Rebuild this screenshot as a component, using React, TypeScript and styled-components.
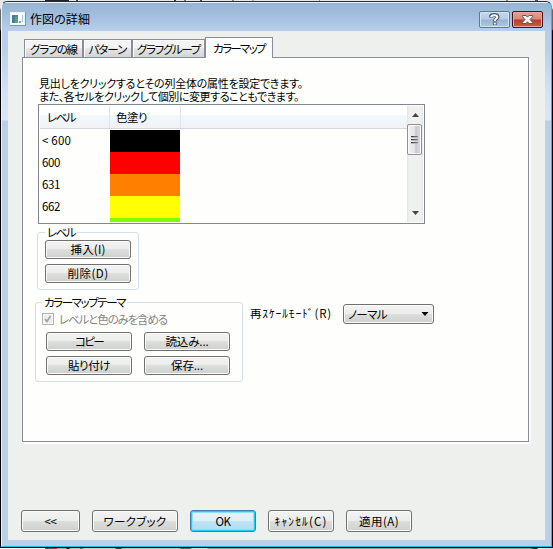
import React, { useLayoutEffect, useRef, useState } from 'react';
import styled, { createGlobalStyle, css } from 'styled-components';

const Global = createGlobalStyle`
  * { box-sizing: border-box; }
  html, body { margin: 0; padding: 0; overflow: hidden; }
  body {
    font-family: "Noto Sans CJK JP", "Liberation Sans", sans-serif;
    font-size: 11.5px;
    line-height: 12px;
    color: #000;
  }
`;

/* ---------- text fitted to a measured width ---------- */

const TextSpan = styled.span<{ $shift: number }>`
  display: inline-block;
  white-space: pre;
  font-feature-settings: 'palt' 1;
  margin-top: ${p => p.$shift}px;
`;

function Fit({ children, w, shift = 0 }: { children: string; w: number; shift?: number }) {
  const ref = useRef<HTMLSpanElement>(null);
  const [spacing, setSpacing] = useState(0);
  useLayoutEffect(() => {
    if (!ref.current) return;
    const natural = ref.current.getBoundingClientRect().width;
    setSpacing((w - natural) / children.length);
  }, [children, w]);
  return (
    <TextSpan ref={ref} $shift={shift} style={{ letterSpacing: spacing }}>
      {children}
    </TextSpan>
  );
}

/* ---------- window frame ---------- */

const Desktop = styled.div`
  width: 553px;
  height: 549px;
  padding: 1px 1px 2px 1px;
  background:
    linear-gradient(90deg, transparent 45px, #222 45px 69px, transparent 69px 76px, #444 76px 78px, transparent 78px 174px,
      #333 174px 176px, transparent 176px 184px, #777 184px 186px, transparent 186px 200px, #444 200px 202px,
      transparent 202px 232px, #888 232px 234px, transparent 234px 252px, #aaa 252px 254px, transparent 254px 319px,
      #888 319px 320px, transparent 320px 506px, #888 506px 508px, transparent 508px 535px, #555 535px 538px, transparent 538px) 0 0 / 100% 1px no-repeat,
    linear-gradient(90deg, #fff 45px, #555 45px 50px, #d22 55px 57px, #a9a9a9 57px 66px, #111 67px 69px, #bbb 70px 80px,
      #777 80px 82px, #ccc 84px 115px, #444 116px 121px, #bbb 122px 180px, #666 181px 190px, #ddd 192px 207px,
      #999 208px 530px, #333 534px 537px, #ddd 538px) 0 548px / 100% 1px no-repeat,
    linear-gradient(#e8e8e8 0 8px, #666 10px 29px, #000 31px 548px, #fff 548px);
`;

const Window = styled.div`
  width: 551px;
  height: 546px;
  display: flex;
  flex-direction: column;
  padding: 1px 6px 6px 6px;
  border: 1px solid;
  border-color: #243238 #00cfe8 #10c5d8 #e9f4fc;
  border-radius: 6px 6px 0 0;
  background:
    linear-gradient(#e6f1fb, #e6f1fb) 0 0 / 100% 1px no-repeat,
    linear-gradient(#97b5d3 0, #a0bddc 12px, #b5cfea 28px, #b6d0ea 45px, #d3e2f6 92px, #d9e6f6 118px, #b8d1e9 119px);
`;

const TitleBar = styled.header`
  height: 28px;
  display: flex;
  align-items: flex-start;
  padding: 8px 2px 0 2px;
`;

const AppIcon = styled.svg`
  width: 16px;
  height: 14px;
  margin-top: 1px;
`;

const Title = styled.h1`
  flex: 1;
  margin: 1px 0 0 4px;
  font-size: 12px;
  font-weight: 400;
  line-height: 14px;
`;

const CaptionButton = styled.button<{ $close?: boolean }>`
  width: 31px;
  height: 17px;
  margin-left: 2px;
  padding: 0;
  display: flex;
  justify-content: center;
  align-items: center;
  border-radius: 2px;
  ${p => p.$close ? css`
    border: 1px solid #43141d;
    box-shadow: inset 0 0 0 1px #e3a99f;
    background: linear-gradient(#e5a294 0, #d98878 7px, #b93b27 8px, #ca5f43 100%);
  ` : css`
    border: 1px solid #5c7899;
    box-shadow: inset 0 0 0 1px #d3e3f4;
    background: linear-gradient(#c5d8ed 0, #b5cce5 7px, #98b4d4 8px, #adc9e5 100%);
  `}
`;

const Client = styled.main`
  flex: 1;
  display: flex;
  flex-direction: column;
  padding: 6px 15px 8px 14px;
  background: #eef0ee;
`;

/* ---------- tabs ---------- */

const TabStrip = styled.div`
  height: 21px;
  display: flex;
  align-items: flex-end;
  padding-left: 2px;
  position: relative;
  z-index: 1;
`;

const Tab = styled.button<{ $w: number; $active?: boolean }>`
  width: ${p => p.$w}px;
  height: ${p => (p.$active ? 21 : 18)}px;
  padding: 0;
  margin: 0;
  display: flex;
  justify-content: center;
  align-items: center;
  font: inherit;
  color: inherit;
  border: 1px solid #8a8d97;
  border-bottom: 0;
  background: ${p => (p.$active ? '#fefffe' : 'linear-gradient(#f3f4f3 0 45%, #e4e7e5 50%, #d2d5d2)')};
  box-shadow: ${p => (p.$active ? 'none' : 'inset 1px 1px 0 #fbfcfb')};
  & + & { border-left-width: ${p => (p.$active ? 1 : 0)}px; }
  ${p => !p.$active && css`margin-bottom: 1px;`}
`;

const Panel = styled.section`
  width: 507px;
  height: 385px;
  margin-top: -1px;
  padding: 19px 0 0 12px;
  border: 1px solid #8a8d97;
  background: #fefffd;
  box-shadow: 2px 2px 0 #fdfdfb;
`;

const Intro = styled.p`
  margin: 0 0 0 4px;
  height: 27px;
  font-size: 11px;
  line-height: 13px;
  display: flex;
  flex-direction: column;
  align-items: flex-start;
`;

/* ---------- level list ---------- */

const ListBox = styled.div`
  width: 387px;
  height: 120px;
  margin: 0 0 0 3px;
  padding: 1px;
  display: flex;
  border: 1px solid #828790;
`;

const Grid = styled.div`
  flex: 1;
  overflow: hidden;
`;

const HeaderRow = styled.div`
  height: 23px;
  display: flex;
  border-bottom: 1px solid #d3d6da;
  background: linear-gradient(#fefffe 0 9px, #f3f8fc 9px, #f0f2f4);
`;

const HeaderCell = styled.div<{ $w: number; $pad: number }>`
  width: ${p => p.$w}px;
  padding: 5px 0 0 ${p => p.$pad}px;
  border-right: 1px solid #dfe4ea;
`;

const Row = styled.div`
  height: 22px;
  display: flex;
`;

const LevelCell = styled.div`
  width: 70px;
  padding: 4px 0 0 2px;
`;

const Swatch = styled.div<{ $color: string }>`
  width: 70px;
  height: 22px;
  background: ${p => p.$color};
`;

const Body = styled.div`
  padding-top: 1px;
`;

const ScrollBar = styled.div`
  width: 16px;
  display: flex;
  flex-direction: column;
  align-items: flex-start;
  background: linear-gradient(90deg, #e2e4e2, #eff1ef 2px 14px, #e6e8e6);
`;

const ArrowBox = styled.div`
  height: 18px;
  display: flex;
  align-items: center;
  margin-left: 5px;
  svg { display: block; }
`;

const Thumb = styled.div`
  width: 15px;
  height: 31px;
  display: flex;
  flex-direction: column;
  align-items: center;
  justify-content: center;
  gap: 1px;
  border: 1px solid #8e918f;
  border-radius: 2px;
  box-shadow: inset 0 0 0 1px #fafafa;
  background: linear-gradient(90deg, #f3f3f5, #e3e2e7 50%, #cbc8d3 60%, #dddbe3);
`;

const Grip = styled.i`
  width: 7px;
  height: 2px;
  background: linear-gradient(90deg, #333, #8a8a8a);
  border-bottom: 1px solid #bbb;
`;

const TrackSpace = styled.div`
  flex: 1;
`;

/* ---------- groups and controls ---------- */

const Button = styled.button<{ $w: number; $h?: number; $default?: boolean }>`
  width: ${p => p.$w}px;
  height: ${p => p.$h ?? 19}px;
  padding: 0 0 1px;
  display: flex;
  justify-content: center;
  align-items: center;
  font: inherit;
  color: #000;
  border: 1px solid #707070;
  border-radius: 3px;
  box-shadow: inset 0 0 0 1px #fafbfa;
  background: linear-gradient(#f2f3f2 0, #ebedeb 48%, #dcdfdc 50%, #ced0ce 100%);
  ${p => p.$default && css`
    border-color: #3c7fb1;
    box-shadow: inset 0 0 0 1px #20cdf5, inset 0 0 0 2px #8fe0fa;
    background: linear-gradient(#e8f4fa 0, #dcf0fa 48%, #c0e4f5 50%, #afdcf2 100%);
  `}
`;

const Group = styled.fieldset<{ $w: number; $h: number; $pad: string }>`
  width: ${p => p.$w}px;
  height: ${p => p.$h}px;
  min-width: 0;
  margin: 0;
  padding: ${p => p.$pad};
  border: 1px solid #d5dfe8;
  border-radius: 3px;
`;

const Legend = styled.legend<{ $indent: number }>`
  height: 12px;
  margin-left: ${p => p.$indent}px;
  padding: 0 2px;
`;

const Stack = styled.div`
  display: flex;
  flex-direction: column;
  gap: 5px;
`;

const LevelSection = styled.div`
  margin: 2px 0 0 2px;
`;

const ThemeSection = styled.div`
  display: flex;
  align-items: flex-start;
  margin-top: 6px;
`;

const CheckRow = styled.label`
  height: 12px;
  display: flex;
  align-items: center;
  gap: 5px;
  margin-left: -4px;
  color: #858585;
`;

const CheckBox = styled.span`
  width: 12px;
  height: 12px;
  border: 1px solid #b1b3b1;
  background: #eceeec;
  box-shadow: inset 0 0 0 1px #fafafa;
  svg { display: block; }
`;

const ButtonGrid = styled.div`
  display: grid;
  grid-template-columns: 86px 86px;
  column-gap: 12px;
  row-gap: 5px;
  margin-top: 7px;
`;

const Rescale = styled.div`
  display: flex;
  align-items: center;
  height: 20px;
  margin: 8px 0 0 7px;
`;

const RescaleLabel = styled.span`
  width: 93px;
  margin-top: -3px;
`;

const Select = styled.button`
  width: 91px;
  height: 20px;
  padding: 0 4px 0 4px;
  display: flex;
  justify-content: space-between;
  align-items: center;
  font: inherit;
  color: #000;
  border: 1px solid #707070;
  border-radius: 3px;
  box-shadow: inset 0 0 0 1px #fafbfa;
  background: linear-gradient(#f2f3f2 0, #ebedeb 48%, #dcdfdc 50%, #ced0ce 100%);
`;

const Footer = styled.footer`
  display: flex;
  gap: 12px;
  margin: auto 0 0 -1px;
`;

const levels = [
  { label: '< 600', w: 29, color: '#000' },
  { label: '600', w: 18, color: '#f00' },
  { label: '631', w: 18, color: '#ff8000' },
  { label: '662', w: 18, color: '#ff0' },
  { label: '', w: 0, color: '#80ff00' },
];

export default function App() {
  return (
    <>
      <Global />
      <Desktop>
        <Window>
          <TitleBar>
            <AppIcon viewBox="0 0 16 14" shapeRendering="crispEdges">
              <rect width="16" height="14" fill="#8b949b" />
              <rect width="15" height="13" fill="#eef3f5" />
              <rect x="1" y="1" width="13" height="11" fill="#fff" />
              <rect x="2" y="3" width="6" height="8" fill="#438f88" />
              <rect x="2" y="3" width="2" height="8" fill="#4a78ad" />
              <rect x="5" y="5" width="3" height="6" fill="#54a478" />
              <rect x="9" y="9" width="2" height="2" fill="#5bb995" />
              <rect x="12" y="3" width="1" height="7" fill="#9fc6e0" />
            </AppIcon>
            <Title><Fit w={60}>作図の詳細</Fit></Title>
            <CaptionButton>
              <svg width="11" height="13" viewBox="0 0 11 13" fill="none">
                <path d="M2 4.5V3.2Q2.5 2 5.2 2Q8.6 2 8.6 4.1Q8.6 5.3 7 6.2Q5.8 6.9 5.8 8.4M5.8 9.3V12" stroke="#4d566b" strokeWidth="3.8" />
                <path d="M2.3 4V3.4Q2.9 2.2 5.2 2.2Q8.3 2.2 8.3 4.1Q8.3 5.2 6.9 6Q5.8 6.7 5.8 8M5.8 9.8V11.4" stroke="#fff" strokeWidth="2" />
              </svg>
            </CaptionButton>
            <CaptionButton $close>
              <svg width="13" height="11" viewBox="0 0 13 11">
                <path d="M1.5 1.5H5L6.5 3.2L8 1.5H11.5V2.8L9 5.5L11.5 8.2V9.5H8L6.5 7.8L5 9.5H1.5V8.2L4 5.5L1.5 2.8Z" fill="#f8f8f8" stroke="#5c5660" />
              </svg>
            </CaptionButton>
          </TitleBar>
          <Client>
            <TabStrip>
              <Tab $w={59}><Fit w={47}>グラフの線</Fit></Tab>
              <Tab $w={49}><Fit w={38}>パターン</Fit></Tab>
              <Tab $w={73}><Fit w={63}>グラフグループ</Fit></Tab>
              <Tab $w={68} $active><Fit w={52} shift={-1}>カラーマップ</Fit></Tab>
            </TabStrip>
            <Panel>
              <Intro>
                <Fit w={264}>見出しをクリックするとその列全体の属性を設定できます。</Fit>
                <Fit w={260}>また、各セルをクリックして個別に変更することもできます。</Fit>
              </Intro>
              <ListBox>
                <Grid>
                  <HeaderRow>
                    <HeaderCell $w={70} $pad={7}><Fit w={28}>レベル</Fit></HeaderCell>
                    <HeaderCell $w={71} $pad={6}><Fit w={31}>色塗り</Fit></HeaderCell>
                  </HeaderRow>
                  <Body>
                    {levels.map(l => (
                      <Row key={l.color}>
                        <LevelCell>{l.label && <Fit w={l.w}>{l.label}</Fit>}</LevelCell>
                        <Swatch $color={l.color} />
                      </Row>
                    ))}
                  </Body>
                </Grid>
                <ScrollBar>
                  <ArrowBox>
                    <svg width="7" height="4" viewBox="0 0 7 4"><path d="M3.5 0L7 4H0Z" fill="#444" /></svg>
                  </ArrowBox>
                  <Thumb><Grip /><Grip /><Grip /></Thumb>
                  <TrackSpace />
                  <ArrowBox>
                    <svg width="7" height="4" viewBox="0 0 7 4"><path d="M0 0H7L3.5 4Z" fill="#444" /></svg>
                  </ArrowBox>
                </ScrollBar>
              </ListBox>
              <LevelSection>
                <Group $w={102} $h={64} $pad="2px 0 0 7px">
                  <Legend $indent={0}><Fit w={28} shift={-1}>レベル</Fit></Legend>
                  <Stack>
                    <Button $w={86}><Fit w={35}>挿入(I)</Fit></Button>
                    <Button $w={86}><Fit w={41}>削除(D)</Fit></Button>
                  </Stack>
                </Group>
              </LevelSection>
              <ThemeSection>
                <Group $w={208} $h={86} $pad="5px 0 0 10px">
                  <Legend $indent={-4}><Fit w={81} shift={-1}>カラーマップテーマ</Fit></Legend>
                  <CheckRow>
                    <CheckBox>
                      <svg width="10" height="10" viewBox="0 0 10 10"><path d="M2 5L4 7.5L7.5 2" fill="none" stroke="#a3a5a3" strokeWidth="1.7" /></svg>
                    </CheckBox>
                    <Fit w={108}>レベルと色のみを含める</Fit>
                  </CheckRow>
                  <ButtonGrid>
                    <Button $w={86}><Fit w={28}>コピー</Fit></Button>
                    <Button $w={86}><Fit w={43}>読込み...</Fit></Button>
                    <Button $w={86}><Fit w={42}>貼り付け</Fit></Button>
                    <Button $w={86}><Fit w={32}>保存...</Fit></Button>
                  </ButtonGrid>
                </Group>
                <Rescale>
                  <RescaleLabel><Fit w={83}>再ｽｹｰﾙﾓｰﾄﾞ(R)</Fit></RescaleLabel>
                  <Select>
                    <Fit w={39}>ノーマル</Fit>
                    <svg width="8" height="4" viewBox="0 0 8 4"><path d="M0.5 0H7.5L4 4Z" /></svg>
                  </Select>
                </Rescale>
              </ThemeSection>
            </Panel>
            <Footer>
              <Button $w={59} $h={22}><Fit w={12}>&lt;&lt;</Fit></Button>
              <Button $w={86} $h={22}><Fit w={63}>ワークブック</Fit></Button>
              <Button $w={66} $h={22} $default><Fit w={15}>OK</Fit></Button>
              <Button $w={66} $h={22}><Fit w={53}>ｷｬﾝｾﾙ(C)</Fit></Button>
              <Button $w={66} $h={22}><Fit w={40}>適用(A)</Fit></Button>
            </Footer>
          </Client>
        </Window>
      </Desktop>
    </>
  );
}
